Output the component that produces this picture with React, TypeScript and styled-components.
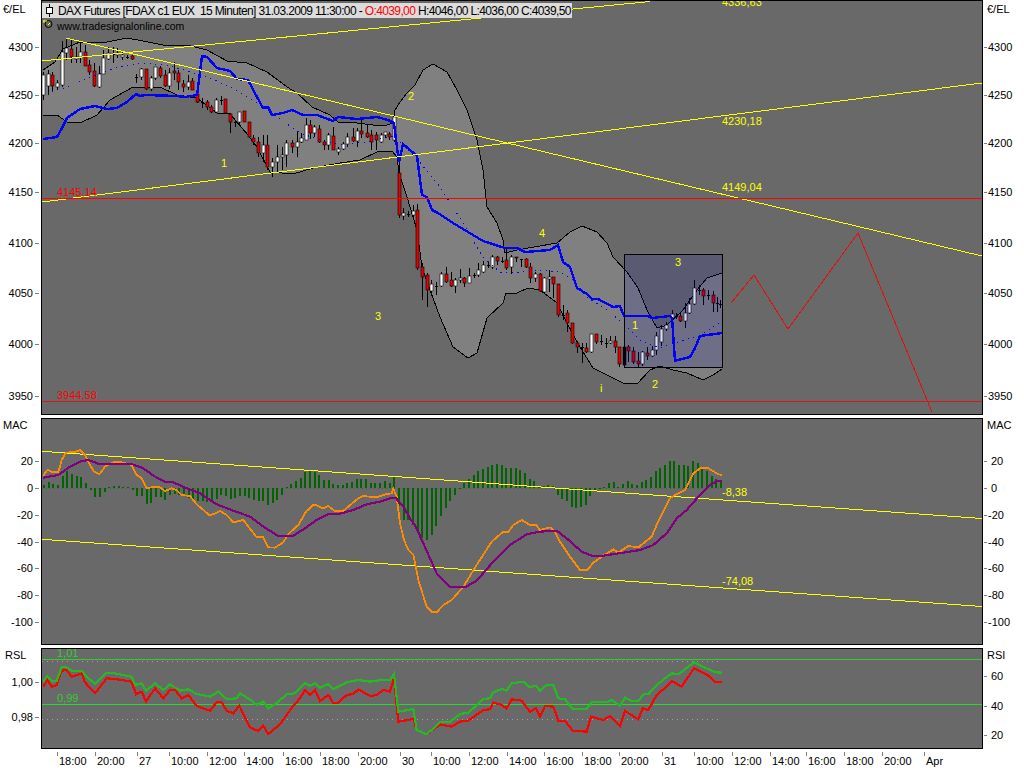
import { FC } from 'react';
import styled, { createGlobalStyle } from 'styled-components';

const GlobalStyle = createGlobalStyle`
	html, body {
		margin: 0;
		background: #fff;
		overflow: hidden;
	}
	body {
		font-family: 'Liberation Sans', Arial, sans-serif;
	}
`;

const Page = styled.div`
	display: flex;
	flex-direction: column;
	gap: 3px;
	width: 1024px;
	height: 768px;
`;

const Row = styled.div<{ $height: number }>`
	display: grid;
	grid-template-columns: 41px 942px 41px;
	height: ${(p) => p.$height}px;
`;

const Panel = styled.div`
	position: relative;
	box-sizing: border-box;
	border: 1px solid #000;
	background: #696969;
	overflow: hidden;
`;

const ChartSvg = styled.svg`
	display: block;
	width: 100%;
	height: 100%;
`;

const AxisSvg = styled.svg`
	display: block;
	width: 100%;
	height: 100%;
	overflow: hidden;
`;

const TitleBar = styled.div`
	position: absolute;
	top: 2px;
	left: 0;
	display: flex;
	align-items: center;
	height: 15px;
	padding-right: 1px;
	background: #dcdcdc;
	color: #000;
	font-size: 12px;
	letter-spacing: -0.62px;
	white-space: pre;
`;

const TitleIcon = styled.svg`
	width: 16px;
	height: 15px;
	flex: none;
`;

const Open = styled.span`
	color: #f00;
`;

const Site = styled.div`
	position: absolute;
	top: 19px;
	left: 15px;
	color: #000;
	font-size: 10.5px;
	line-height: 13px;
`;

const Label = styled.text<{ $color?: string }>`
	fill: ${(p) => p.$color || '#000'};
	font-family: 'Liberation Sans', Arial, sans-serif;
	font-size: 11px;
`;

const Trace = styled.polyline<{ $color: string; $width?: number; $dash?: string }>`
	fill: none;
	stroke: ${(p) => p.$color};
	stroke-width: ${(p) => p.$width || 1};
	stroke-dasharray: ${(p) => p.$dash || 'none'};
	shape-rendering: crispEdges;
`;

const Rule = styled.line<{ $color: string; $width?: number; $dash?: string }>`
	stroke: ${(p) => p.$color};
	stroke-width: ${(p) => p.$width || 1};
	stroke-dasharray: ${(p) => p.$dash || 'none'};
	shape-rendering: crispEdges;
`;

const Wick = styled.line`
	stroke: #000;
	stroke-width: 1;
	shape-rendering: crispEdges;
`;

const Body = styled.rect<{ $kind: string }>`
	fill: ${(p) => (p.$kind === 'w' ? '#fff' : p.$kind === 'r' ? '#e80000' : '#000')};
	stroke: #000;
	stroke-width: 0.6;
`;

const Bar = styled.rect`
	fill: #006400;
	shape-rendering: crispEdges;
`;

const BandFill = styled.polygon`
	fill: #808080;
`;

const Selection = styled.rect`
	fill: rgba(0, 0, 180, 0.14);
	stroke: #000;
	stroke-width: 1;
	shape-rendering: crispEdges;
`;

// read off the reference: page coordinates unless a zoom origin is given
const pts = (s: string, ox = 0, oy = 0, k = 1): string =>
	s
		.trim()
		.split(/\s+/)
		.map((p) => {
			const [x, y] = p.split(',').map(Number);
			return `${ox + x / k},${oy + y / k}`;
		})
		.join(' ');

const UPPER =
	'43,70 55,62 63,49 80,42 107,42 127,38 143,41 163,45 187,45 207,50 227,61 247,63 267,72 287,87 297,93 312,107 330,115 338,122 357,123 373,125 387,125 393,123 395,110 400,102 407,93 415,85 423,70 433,64 447,72 457,90 467,110 477,140 483,170 487,207 497,223 503,240 505,253 517,250 557,243 570,232 582,226 597,232 607,243 613,257 627,272 638,288 647,310 657,328 667,325 683,310 697,290 707,278 722,273';
const LOWER =
	'43,115 57,115 67,122 80,123 97,115 110,100 133,87 160,87 177,95 197,98 217,113 230,114 248,135 257,147 270,172 293,174 313,168 340,163 360,160 377,152 392,151 397,157 399,173 407,197 417,230 422,267 430,290 440,317 453,347 468,358 477,353 487,318 503,303 506,293 517,293 528,288 540,290 557,303 567,323 580,347 593,368 607,375 623,383 637,384 650,370 660,366 673,370 687,373 703,380 713,375 722,369';
const BLUE =
	'43,139 57,137 62,128 67,118 80,109 95,106 107,109 117,108 127,102 136,94 140,96 145,95 177,96 185,97 197,95 199,80 202,56 207,57 217,68 230,71 237,79 248,80 257,97 263,108 268,107 272,115 283,113 292,110 303,115 317,115 333,121 338,117 357,119 377,117 388,120 394,123 396,140 399,162 403,144 417,156 422,195 427,197 432,210 438,213 453,223 473,235 483,241 505,248 517,248 525,252 550,250 558,245 563,262 570,267 577,288 587,294 592,299 598,299 613,307 620,306 624,316 648,316 652,318 670,316 672,318 675,361 678,360 690,357 695,348 700,336 722,333';
const MIDDLE =
	'52,92 67,87 93,76 117,67 140,63 167,65 187,71 207,77 233,88 253,100 277,117 300,133 320,140 340,145 367,142 387,137 394,136 418,160 440,187 463,223 483,257 500,272 520,272 540,270 560,272 573,280 587,297 607,310 623,323 640,340 653,346 660,348 700,335 722,321';

type Candle = [number, number, number, number, number, string];

const CANDLES: Candle[] = [
	[43, 72, 75, 95, 100, 'w'], [48, 70, 74, 86, 95, 'w'], [52, 72, 75, 86, 92, 'r'], [57, 80, 83, 87, 90, 'w'],
	[62, 41, 52, 85, 87, 'w'], [66, 38, 48, 53, 60, 'w'], [71, 40, 49, 57, 63, 'r'], [76, 47, 57, 59, 63, 'w'],
	[80, 43, 52, 57, 63, 'w'], [85, 45, 52, 66, 66, 'r'], [89, 60, 65, 72, 75, 'r'], [94, 63, 71, 86, 87, 'r'],
	[99, 66, 74, 87, 88, 'w'], [103, 50, 58, 74, 74, 'w'], [108, 47, 53, 59, 60, 'w'], [113, 47, 54, 54, 63, 'd'],
	[117, 48, 53, 55, 58, 'w'], [122, 52, 55, 57, 60, 'w'], [127, 55, 57, 57, 59, 'd'], [132, 55, 56, 59, 60, 'r'],
	[136, 74, 77, 77, 83, 'd'], [141, 68, 69, 77, 80, 'w'], [146, 69, 69, 89, 90, 'r'], [151, 76, 78, 89, 91, 'w'],
	[155, 67, 67, 78, 80, 'w'], [160, 66, 68, 76, 78, 'r'], [165, 70, 75, 86, 87, 'r'], [169, 68, 73, 86, 89, 'w'],
	[174, 62, 71, 73, 80, 'r'], [178, 70, 73, 82, 90, 'r'], [183, 80, 84, 87, 92, 'r'], [188, 75, 82, 87, 90, 'w'],
	[192, 78, 81, 90, 90, 'r'], [197, 90, 94, 102, 103, 'r'], [202, 98, 102, 102, 108, 'd'], [207, 100, 102, 107, 110, 'r'],
	[211, 105, 107, 112, 113, 'r'], [216, 98, 100, 112, 113, 'w'], [221, 96, 100, 100, 105, 'd'], [225, 99, 99, 113, 114, 'r'],
	[230, 113, 114, 122, 133, 'r'], [235, 120, 122, 122, 127, 'd'], [239, 112, 112, 122, 124, 'w'], [244, 111, 111, 122, 122, 'r'],
	[249, 122, 122, 137, 138, 'r'], [253, 135, 138, 142, 145, 'r'], [258, 137, 142, 153, 157, 'r'], [263, 135, 145, 153, 162, 'w'],
	[267, 135, 145, 167, 170, 'r'], [272, 158, 162, 167, 177, 'w'], [277, 145, 157, 162, 172, 'w'], [282, 147, 155, 157, 170, 'w'],
	[286, 140, 143, 155, 167, 'w'], [292, 140, 143, 147, 153, 'r'], [297, 132, 142, 147, 157, 'w'], [301, 133, 138, 142, 143, 'w'],
	[306, 118, 125, 140, 140, 'w'], [310, 120, 125, 133, 139, 'r'], [314, 125, 127, 133, 137, 'w'], [319, 125, 129, 142, 143, 'r'],
	[324, 140, 142, 145, 150, 'r'], [328, 133, 135, 145, 150, 'w'], [333, 127, 136, 150, 150, 'r'], [338, 147, 149, 152, 155, 'w'],
	[343, 142, 144, 149, 150, 'w'], [347, 133, 137, 144, 147, 'w'], [353, 128, 137, 141, 142, 'r'], [357, 128, 131, 141, 147, 'w'],
	[361, 117, 131, 134, 138, 'r'], [367, 125, 133, 137, 138, 'r'], [371, 130, 135, 142, 150, 'r'], [376, 132, 135, 140, 150, 'r'],
	[381, 133, 135, 142, 143, 'w'], [385, 132, 132, 135, 138, 'w'], [389, 132, 134, 137, 140, 'r'], [394, 117, 117, 140, 142, 'w'],
	[399, 160, 173, 215, 218, 'r'], [403, 208, 213, 216, 220, 'w'], [408, 211, 214, 214, 217, 'd'], [413, 205, 211, 215, 220, 'w'],
	[417, 204, 210, 268, 270, 'r'], [422, 263, 267, 277, 300, 'r'], [427, 273, 275, 290, 307, 'r'], [431, 280, 284, 291, 295, 'w'],
	[436, 282, 286, 286, 295, 'd'], [441, 272, 274, 286, 287, 'w'], [446, 267, 274, 282, 283, 'r'], [451, 272, 280, 286, 287, 'r'],
	[455, 278, 280, 286, 293, 'w'], [460, 269, 278, 280, 283, 'w'], [464, 277, 278, 283, 287, 'r'], [469, 268, 276, 283, 283, 'w'],
	[474, 273, 275, 275, 278, 'd'], [478, 263, 270, 275, 277, 'w'], [483, 261, 265, 272, 273, 'w'], [488, 262, 265, 265, 268, 'd'],
	[492, 255, 257, 267, 269, 'w'], [497, 256, 257, 261, 265, 'r'], [502, 257, 261, 261, 263, 'd'], [506, 248, 260, 268, 270, 'r'],
	[511, 255, 257, 267, 274, 'w'], [516, 257, 257, 258, 262, 'r'], [521, 259, 259, 259, 267, 'd'], [526, 258, 259, 267, 268, 'r'],
	[530, 263, 267, 278, 283, 'r'], [535, 272, 274, 278, 282, 'w'], [540, 273, 274, 291, 292, 'r'], [544, 277, 278, 292, 293, 'w'],
	[549, 270, 277, 279, 292, 'w'], [553, 277, 277, 284, 298, 'r'], [558, 284, 284, 315, 317, 'r'], [563, 305, 315, 315, 320, 'd'],
	[567, 310, 313, 323, 332, 'r'], [572, 323, 323, 343, 344, 'r'], [577, 343, 343, 347, 353, 'r'], [582, 343, 347, 347, 363, 'd'],
	[586, 343, 348, 352, 353, 'r'], [591, 334, 334, 352, 353, 'w'], [596, 334, 334, 342, 344, 'r'], [601, 335, 341, 341, 345, 'd'],
	[606, 338, 343, 343, 348, 'd'], [610, 336, 341, 343, 344, 'w'], [615, 336, 341, 347, 353, 'r'], [619, 347, 347, 364, 367, 'r'],
	[624, 347, 347, 365, 367, 'k'], [628, 345, 347, 351, 362, 'r'], [633, 347, 351, 362, 364, 'r'], [638, 352, 361, 364, 368, 'r'],
	[642, 351, 352, 364, 366, 'w'], [647, 347, 353, 356, 360, 'r'], [652, 346, 350, 356, 357, 'w'], [656, 332, 336, 350, 355, 'w'],
	[661, 325, 329, 342, 346, 'w'], [666, 322, 325, 329, 331, 'w'], [672, 310, 314, 318, 320, 'w'], [676, 313, 316, 316, 319, 'd'],
	[680, 312, 316, 321, 322, 'r'], [685, 303, 313, 321, 328, 'w'], [689, 298, 304, 313, 314, 'w'], [694, 280, 288, 304, 305, 'w'],
	[699, 285, 290, 290, 295, 'd'], [703, 288, 290, 296, 305, 'r'], [708, 290, 295, 295, 300, 'd'], [713, 291, 295, 303, 312, 'r'],
	[717, 297, 303, 303, 312, 'd'], [720, 300, 304, 304, 308, 'd'],
];

// histogram heights in 3x zoom pixels, positive goes up from the zero line
const HIST = [
	8, 18, 12, 8, 37, 50, 42, 37, 33, 15, -5, -28, -28, -13, 3, 6, 7, 4, 2, -5, -25, -25, -47, -45, -28, -28, -35, -22, -18,
	-20, -25, -30, -35, -38, -40, -43, -40, -33, -22, -25, -33, -30, -25, -25, -30, -35, -40, -40, -52, -45, -35, -22, 3, 12,
	22, 30, 48, 50, 48, 38, 25, 25, 12, 8, 10, 15, 18, 28, 28, 27, 15, 15, 15, 20, 15, 32, -55, -95, -95, -110, -135, -150,
	-157, -140, -115, -85, -60, -40, -20, -2, 15, 28, 40, 50, 58, 62, 70, 72, 68, 60, 60, 60, 55, 45, 27, 22, 5, 5, 10, 5, -22,
	-32, -38, -58, -60, -58, -50, -25, -10, -3, 3, 15, 18, 2, 12, 20, 12, 8, 18, 25, 32, 50, 60, 68, 80, 80, 68, 68, 65, 80,
	75, 58, 50, 35, 28, 20,
];

const ORANGE =
	pts('130,197 142,180 160,187 175,187 185,150 198,128 225,126 240,120 255,135 270,165 282,185 298,193 315,170 340,157 365,157 395,165 410,195 425,205 440,235 455,232 480,232 495,243 515,235 530,240 545,255 570,258 590,283 630,317 660,303 680,315 700,337 730,330 770,382 790,382 805,412 825,413 850,397 865,372 895,345 918,305 942,283 968,295 985,288 1005,303 1030,302 1075,265 1090,258 1130,262 1160,252 1175,250', 0, 410, 3) +
	' ' +
	pts('10,236 20,260 30,340 42,390 55,420 70,435 85,510 110,590 125,605 142,605 160,585 185,570 220,530 260,465 305,395 340,365 355,365 370,345 395,330 420,345 438,345 450,360 480,352 495,365 510,395 540,440 570,480 592,480 610,458 640,437 670,418 685,428 715,408 745,412 760,400 785,380 800,345 840,265 860,252 885,240 910,190 930,175 955,175 985,193 997,195', 390, 410, 3);

const PURPLE =
	pts('130,203 175,195 210,170 240,155 265,150 300,163 340,163 395,162 430,175 460,197 495,215 520,217 560,235 600,250 650,283 700,302 750,320 790,350 835,378 880,377 915,355 950,330 985,312 1020,311 1060,300 1100,283 1140,275', 0, 410, 3) +
	' ' +
	pts('0,265 18,265 40,290 60,325 75,345 100,400 140,490 180,532 225,532 260,512 310,455 360,405 410,373 450,365 500,362 530,385 575,425 605,437 640,437 700,428 750,420 790,405 830,370 860,325 890,300 930,255 960,225 985,212 997,212', 390, 410, 3);

const RSL_GREEN =
	pts('130,125 142,108 155,122 170,122 185,82 200,82 215,92 245,92 260,110 285,132 320,98 345,100 395,110 405,135 425,130 438,152 465,130 490,150 510,133 540,152 565,148 590,162 630,170 655,155 680,177 710,175 720,160 745,175 770,195 790,185 805,205 835,185 860,163 885,160 915,130 930,138 945,130 960,143 985,132 1000,147 1040,127 1075,120 1110,125 1145,120 1170,120', 0, 640, 3) +
	' ' +
	pts('12,102 25,215 70,207 80,270 110,283 125,270 150,245 180,245 210,222 235,218 280,177 300,175 310,157 335,147 350,152 365,130 400,125 420,142 438,137 450,152 470,135 490,135 505,175 525,178 548,207 590,207 605,187 650,187 665,180 690,197 705,173 725,183 745,183 760,163 775,163 800,135 845,100 865,103 912,67 950,85 975,97 997,98', 390, 640, 3);

const RSL_RED =
	pts('130,140 142,120 155,140 170,135 185,92 200,90 215,110 245,100 255,127 285,160 320,115 345,117 395,125 408,163 425,155 438,185 465,145 490,175 510,150 525,150 545,175 565,165 590,198 630,212 650,187 665,187 680,212 700,220 718,197 750,262 775,273 790,258 805,282 840,253 880,197 900,175 915,150 930,165 945,150 960,183 985,165 1000,190 1015,188 1040,165 1060,162 1075,148 1110,168 1130,165 1150,150 1170,155', 0, 640, 3) +
	' ' +
	pts('12,115 25,245 70,237 80,270 110,283 125,272 150,253 185,260 210,245 235,242 280,210 300,208 310,187 335,195 350,205 365,178 395,182 420,215 438,205 450,230 465,198 490,200 505,242 525,243 548,272 590,275 603,230 640,240 660,228 690,258 705,213 745,238 758,205 775,210 800,165 820,148 845,123 875,140 912,85 950,103 975,125 997,125', 390, 640, 3);

const PRICE_TICKS: [string, number][] = [
	['4300', 47], ['4250', 95], ['4200', 143], ['4150', 192], ['4100', 243], ['4050', 293], ['4000', 344], ['3950', 396],
];
const MAC_TICKS: [string, number][] = [
	['20', 461], ['0', 488], ['-20', 515], ['-40', 542], ['-60', 568], ['-80', 595], ['-100', 622],
];
const RSL_TICKS: [string, number][] = [['1,00', 682], ['0,98', 717]];
const RSI_TICKS: [string, number][] = [['60', 676], ['40', 706], ['20', 735]];

const TIME_TICKS: [string, number][] = [
	['18:00', 57], ['20:00', 95], ['27', 137], ['10:00', 169], ['12:00', 207], ['14:00', 244], ['16:00', 283], ['18:00', 320],
	['20:00', 358], ['30', 400], ['10:00', 431], ['12:00', 469], ['14:00', 507], ['16:00', 544], ['18:00', 582], ['20:00', 619],
	['31', 662], ['10:00', 694], ['12:00', 732], ['14:00', 770], ['16:00', 806], ['18:00', 844], ['20:00', 882], ['Apr', 924],
];

interface AxisProps {
	top: number;
	height: number;
	title: string;
	titleY: number;
	ticks: [string, number][];
}

const LeftAxis: FC<AxisProps> = ({ top, height, title, titleY, ticks }) => (
	<AxisSvg viewBox={`0 ${top} 41 ${height}`}>
		<Label x={title === 'RSL' ? 5 : 3} y={titleY}>
			{title}
		</Label>
		{ticks.map(([text, y]) => (
			<g key={text}>
				<Label x={33} y={y + 4} textAnchor="end">
					{text}
				</Label>
				<Rule x1={35} x2={39} y1={y + 0.5} y2={y + 0.5} $color="#808080" />
			</g>
		))}
	</AxisSvg>
);

const RightAxis: FC<AxisProps> = ({ top, height, title, titleY, ticks }) => (
	<AxisSvg viewBox={`983 ${top} 41 ${height}`}>
		<Label x={987} y={titleY}>
			{title}
		</Label>
		{ticks.map(([text, y]) => (
			<g key={text}>
				<Label x={text.startsWith('-') || text.length > 2 ? 988 : 991} y={y + 4}>
					{text}
				</Label>
				<Rule x1={984} x2={987} y1={y + 0.5} y2={y + 0.5} $color="#808080" />
			</g>
		))}
	</AxisSvg>
);

const Candles: FC = () => (
	<>
		{CANDLES.map(([x, hi, top, bot, lo, kind]) => (
			<g key={x}>
				<Wick x1={x + 0.5} x2={x + 0.5} y1={hi} y2={lo} />
				{kind === 'd' ? (
					<Wick x1={x - 1} x2={x + 2} y1={top + 0.5} y2={top + 0.5} />
				) : (
					<Body x={x - 1} y={top} width={3} height={Math.max(bot - top, 1)} $kind={kind} />
				)}
			</g>
		))}
	</>
);

const PriceChart: FC = () => (
	<ChartSvg viewBox="42 1 940 413">
		<BandFill points={`${UPPER} ${LOWER.split(' ').reverse().join(' ')}`} />
		<Trace points={UPPER} $color="#000" />
		<Trace points={LOWER} $color="#000" />
		<Candles />
		<Trace points={MIDDLE} $color="#0000ff" $width={1} $dash="1.2 4.5" />
		<Trace points={BLUE} $color="#0000ff" $width={2.4} />
		<Rule x1={42} y1={60.9} x2={650} y2={1.5} $color="#ffff00" />
		<Rule x1={42} y1={202} x2={982} y2={83} $color="#ffff00" />
		<Rule x1={66} y1={38} x2={982} y2={256} $color="#ffff00" />
		<Rule x1={42} y1={198.5} x2={982} y2={198.5} $color="#ff0000" />
		<Rule x1={42} y1={401.5} x2={982} y2={401.5} $color="#d81818" />
		<Trace points="731,303 754,275 788,329 858,233 932,412" $color="#e01010" />
		<Selection x={624.5} y={254.5} width={98} height={113} />
		<Label x={57} y={196} $color="#ff0000">4145,14</Label>
		<Label x={57} y={399} $color="#ff0000">3944,58</Label>
		<Label x={722} y={6} $color="#ffff00">4336,63</Label>
		<Label x={722} y={125} $color="#ffff00">4230,18</Label>
		<Label x={722} y={191} $color="#ffff00">4149,04</Label>
		<Label x={221} y={167} $color="#ffff00">1</Label>
		<Label x={408} y={100} $color="#ffff00">2</Label>
		<Label x={375} y={320} $color="#ffff00">3</Label>
		<Label x={539} y={237} $color="#ffff00">4</Label>
		<Label x={632} y={329} $color="#ffff00">1</Label>
		<Label x={652} y={388} $color="#ffff00">2</Label>
		<Label x={675} y={266} $color="#ffff00">3</Label>
		<Label x={600} y={392} $color="#ffff00">i</Label>
		<circle cx={48.5} cy={24} r={3.5} fill="none" stroke="#000" />
		<path d="M43 21h4M44 20v3M50 23l-2 2" stroke="#ffff00" fill="none" />
	</ChartSvg>
);

const MacChart: FC = () => {
	const step = (720 - 43) / (HIST.length - 1);
	return (
		<ChartSvg viewBox="42 419 940 225">
			<Rule x1={42} x2={720} y1={488.5} y2={488.5} $color="#3a6a3a" $dash="1 3" />
			{HIST.map((v, i) => {
				const h = Math.abs(v) / 3;
				return <Bar key={i} x={Math.round(43 + i * step)} y={v > 0 ? 488 - h : 488} width={2} height={Math.max(h, 1)} />;
			})}
			<Rule x1={42} y1={451.3} x2={982} y2={518.5} $color="#ffff00" />
			<Rule x1={42} y1={539.3} x2={982} y2={606.5} $color="#ffff00" />
			<Trace points={ORANGE} $color="#ff8c00" $width={1.8} />
			<Trace points={PURPLE} $color="#800080" $width={2.2} />
			<Label x={722} y={496} $color="#ffff00">-8,38</Label>
			<Label x={722} y={585} $color="#ffff00">-74,08</Label>
		</ChartSvg>
	);
};

const RslChart: FC = () => (
	<ChartSvg viewBox="42 649 940 99">
		<Rule x1={42} x2={720} y1={661.5} y2={661.5} $color="#a0a0a0" $dash="1 4" />
		<Rule x1={42} x2={720} y1={719.5} y2={719.5} $color="#a0a0a0" $dash="1 4" />
		<Rule x1={42} x2={982} y1={659.5} y2={659.5} $color="#33cc33" />
		<Rule x1={42} x2={982} y1={704.5} y2={704.5} $color="#22dd22" $width={1.5} />
		<Trace points={RSL_RED} $color="#ff0000" $width={2.2} />
		<Trace points={RSL_GREEN} $color="#22bb22" $width={2.2} />
		<Label x={57} y={657} $color="#33cc33">1,01</Label>
		<Label x={57} y={702} $color="#33cc33">0,99</Label>
	</ChartSvg>
);

const TimeAxis: FC = () => (
	<AxisSvg viewBox="0 749 1024 19">
		{TIME_TICKS.map(([text, x]) => (
			<g key={`${text}-${x}`}>
				<Rule x1={x + 0.5} x2={x + 0.5} y1={752} y2={756} $color="#808080" />
				<Label x={x + 2} y={765}>
					{text}
				</Label>
			</g>
		))}
	</AxisSvg>
);

const BottomStack = styled.div`
	display: flex;
	flex-direction: column;
`;

const TimeRow = styled.div`
	height: 19px;
`;

const App: FC = () => (
	<Page>
		<GlobalStyle />
		<Row $height={415}>
			<LeftAxis top={0} height={415} title="€/EL" titleY={13} ticks={PRICE_TICKS} />
			<Panel>
				<PriceChart />
				<TitleBar>
					<TitleIcon viewBox="0 0 16 15">
						<path d="M7.5 1v13" stroke="#000" />
						<rect x={4.5} y={4.5} width={6} height={6} fill="#fff" stroke="#000" />
					</TitleIcon>
					DAX Futures [FDAX c1 EUX  15 Minuten] 31.03.2009 11:30:00 - <Open>O:4039,00</Open> H:4046,00 L:4036,00 C:4039,50
				</TitleBar>
				<Site>www.tradesignalonline.com</Site>
			</Panel>
			<RightAxis top={0} height={415} title="€/EL" titleY={13} ticks={PRICE_TICKS} />
		</Row>
		<Row $height={227}>
			<LeftAxis top={418} height={227} title="MAC" titleY={429} ticks={MAC_TICKS} />
			<Panel>
				<MacChart />
			</Panel>
			<RightAxis top={418} height={227} title="MAC" titleY={429} ticks={MAC_TICKS} />
		</Row>
		<BottomStack>
			<Row $height={101}>
				<LeftAxis top={648} height={101} title="RSL" titleY={659} ticks={RSL_TICKS} />
				<Panel>
					<RslChart />
				</Panel>
				<RightAxis top={648} height={101} title="RSI" titleY={659} ticks={RSI_TICKS} />
			</Row>
			<TimeRow>
				<TimeAxis />
			</TimeRow>
		</BottomStack>
	</Page>
);

export default App;
